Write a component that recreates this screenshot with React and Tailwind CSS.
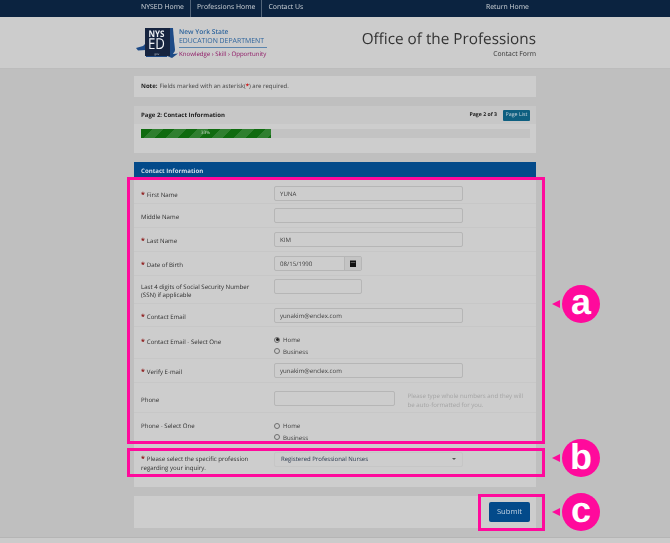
function Label({ req, children, mt = 'mt-[4.5px]' }) {
  return (
    <div className={`w-[133px] shrink-0 pr-[10px] text-[6.1px] leading-[8.7px] text-[#2e2e2e] ${mt}`}>
      {req && <span className="text-[#8a0f0f] font-bold text-[7px] leading-[8px] mr-[2px]">*</span>}
      {children}
    </div>
  )
}

function Input({ value, w = 'w-[189px]' }) {
  return (
    <div className={`${w} h-[15px] flex items-center px-[5px] border border-[#b6b6b6] rounded-[2px] text-[6.1px] text-[#3c3c3c]`}>
      {value}
    </div>
  )
}

function Row({ h, pt = 'pt-[4px]', mt, label, req, border = true, children }) {
  return (
    <div className={`flex items-start px-[7px] ${pt} ${h} ${border ? 'border-b border-[#c7c7c7]' : ''}`}>
      <Label req={req} mt={mt}>{label}</Label>
      {children}
    </div>
  )
}

function Radio({ checked, children }) {
  return (
    <div className="flex items-center h-[11.5px] text-[6.1px] text-[#3c3c3c]">
      <span className="w-[6px] h-[6px] rounded-full border border-[#6e6e6e] mr-[3px] flex items-center justify-center">
        {checked && <span className="w-[3px] h-[3px] rounded-full bg-[#222]" />}
      </span>
      {children}
    </div>
  )
}

function Logo() {
  return (
    <div className="flex items-center ml-[2px]">
      <svg width="42" height="34" viewBox="0 0 42 34">
        <path d="M0 22 L7 20 L10 17 L10 3 L36 2 L38 15 L39 24 L37 28 L42 27.5 L36 32 L31 30 L31 31 L10 31 L10 24 L2 24.5 Z" fill="#1d4a86" />
        <rect x="9" y="2" width="25" height="28" fill="#16243f" />
        <path d="M34 2 L37 2 L38 16 L38.5 26 L34 28 Z" fill="#1d4a86" />
        <text x="20.5" y="11" textAnchor="middle" fill="#eef1f5" fontSize="9" fontWeight="700" textLength="16" lengthAdjust="spacingAndGlyphs" fontFamily="Open Sans, sans-serif">NYS</text>
        <text x="20.5" y="23" textAnchor="middle" fill="#eef1f5" fontSize="15" textLength="17" lengthAdjust="spacingAndGlyphs" fontFamily="Open Sans, sans-serif">ED</text>
        <text x="20.5" y="28.5" textAnchor="middle" fill="#b9c2cf" fontSize="3" fontFamily="Open Sans, sans-serif">.gov</text>
      </svg>
      <div className="ml-[1px] w-[88px]">
        <div className="text-[6.7px] leading-[9.5px] font-semibold text-[#2f659d]">New York State</div>
        <div className="text-[6.9px] leading-[9.5px] text-[#2f659d] whitespace-nowrap border-b border-[#5c85ad] pb-[1px]">EDUCATION DEPARTMENT</div>
        <div className="text-[6.1px] leading-[9px] mt-[0.5px] text-[#8d1463] whitespace-nowrap">Knowledge › Skill › Opportunity</div>
      </div>
    </div>
  )
}

function Callout({ letter, className, pb }) {
  return (
    <div className={`absolute left-[552px] flex items-center ${className}`}>
      <span className="w-0 h-0 border-y-[4px] border-y-transparent border-r-[8px] border-r-[#ff0a9c] mr-[2px]" />
      <span className={`w-[38px] h-[38px] rounded-full bg-[#ff0a9c] text-white font-bold text-[36px] flex items-center justify-center font-['Liberation_Sans',sans-serif] ${pb}`}>{letter}</span>
    </div>
  )
}

export default function App() {
  return (
    <div className="relative h-[543px] w-[670px] overflow-hidden bg-[#bfbfbf] font-['Open_Sans',sans-serif] [text-rendering:geometricPrecision]">
      <div className="blur-[0.3px]">
        <nav className="h-[17px] bg-[#0b2340] text-[#d0d5da] text-[6.9px] flex justify-center">
          <div className="w-[402px] flex items-center">
            <span className="pl-[7px] pr-[6px] h-full flex items-center border-r border-[#53657a]">NYSED Home</span>
            <span className="px-[6px] h-full flex items-center border-r border-[#53657a]">Professions Home</span>
            <span className="px-[6px]">Contact Us</span>
            <span className="ml-auto mr-[7px]">Return Home</span>
          </div>
        </nav>

        <header className="h-[52px] bg-[#cccccc] border-b border-[#bcbcbc] flex justify-center">
          <div className="w-[402px] flex items-center justify-between">
            <Logo />
            <div className="text-right text-[#333] pt-[3px]">
              <div className="text-[15.3px] leading-[18px]">Office of the Professions</div>
              <div className="text-[6.8px] leading-[9px] mt-[1px]">Contact Form</div>
            </div>
          </div>
        </header>

        <main className="w-[402px] mx-auto pt-[7px]">
          <div className="h-[21px] bg-[#cdcdcd] flex items-center px-[7px] text-[6px] text-[#444]">
            <b className="text-[#222] mr-[2px]">Note:</b> Fields marked with an asterisk(<span className="text-[#c00] font-bold">*</span>) are required.
          </div>

          <div className="mt-[9px] h-[47px] bg-[#cdcdcd]">
            <div className="h-[18px] bg-[#c7c7c7] flex items-center pl-[7px] pr-[6px] text-[#222] font-bold">
              <span className="text-[6px]">Page 2: Contact Information</span>
              <span className="ml-auto text-[5.2px]">Page 2 of 3</span>
              <span className="ml-[6px] w-[27px] h-[11px] rounded-[1px] bg-[#0e5f80] text-[#c6d5dc] text-[5.3px] font-normal flex items-center justify-center">Page List</span>
            </div>
            <div className="mx-[6.5px] mt-[5px] h-[9px] bg-[#c3c3c3]">
              <div className="w-[130px] h-full bg-[repeating-linear-gradient(135deg,#0f6b0f_0_8px,#2f7f2f_8px_16px)] text-[#c5d8c5] text-[4.5px] flex items-center justify-center">33%</div>
            </div>
          </div>

          <div className="mt-[9px] h-[325px] bg-[#cdcdcd] rounded-t-[1px]">
            <div className="h-[17px] bg-[#034a8a] flex items-center px-[7px] text-[6.1px] font-bold text-[#d5dfe9]">Contact Information</div>

            <Row h="h-[25px]" pt="pt-[7px]" label="First Name" req><Input value="YUNA" /></Row>
            <Row h="h-[24px]" label="Middle Name"><Input /></Row>
            <Row h="h-[24px]" label="Last Name" req><Input value="KIM" /></Row>
            <Row h="h-[24px]" label="Date of Birth" req>
              <div className="w-[88px] h-[15px] flex border border-[#b6b6b6] rounded-[2px] text-[6.1px] text-[#3c3c3c]">
                <span className="flex-1 flex items-center px-[5px]">08/15/1990</span>
                <span className="w-[17px] bg-[#c4c4c4] border-l border-[#b6b6b6] flex items-center justify-center">
                  <svg width="6" height="7" viewBox="0 0 6 7">
                    <rect x="0" y="0.5" width="6" height="6.5" fill="#111" />
                    <rect x="0.7" y="2" width="4.6" height="0.6" fill="#888" />
                  </svg>
                </span>
              </div>
            </Row>
            <Row h="h-[28px]" pt="pt-[3px]" mt="mt-[3.5px]" label="Last 4 digits of Social Security Number (SSN) if applicable"><Input w="w-[88px]" /></Row>
            <Row h="h-[23px]" label="Contact Email" req><Input value="yunakim@enclex.com" /></Row>
            <Row h="h-[32px]" pt="pt-[7px]" mt="mt-[4px]" label="Contact Email - Select One" req>
              <div><Radio checked>Home</Radio><Radio>Business</Radio></div>
            </Row>
            <Row h="h-[24px]" label="Verify E-mail" req><Input value="yunakim@enclex.com" /></Row>
            <Row h="h-[30px]" pt="pt-[8px]" label="Phone">
              <Input w="w-[121px]" />
              <p className="ml-[13px] w-[122px] mt-[1px] text-[6.1px] leading-[8.5px] text-[#a4a4a4]">Please type whole numbers and they will be auto-formatted for you.</p>
            </Row>
            <Row h="h-[33px]" pt="pt-[7px]" mt="mt-[1.5px]" label="Phone - Select One" border={false}>
              <div><Radio>Home</Radio><Radio>Business</Radio></div>
            </Row>
            <div className="flex items-start px-[7px] pt-[5.5px]">
              <Label req mt="mt-[3.5px]">Please select the specific profession regarding your inquiry.</Label>
              <div className="w-[189px] h-[15px] flex items-center justify-between px-[6px] text-[6px] text-[#2c3a50] border border-[#c6c6c6] rounded-[2px]">
                Registered Professional Nurses
                <span className="w-0 h-0 border-x-[2px] border-x-transparent border-t-[2px] border-t-[#555]" />
              </div>
            </div>
          </div>

          <div className="mt-[9px] h-[32px] bg-[#cdcdcd] flex items-center justify-end pr-[6px]">
            <button className="w-[41px] h-[20px] rounded-[2px] bg-[#034a8a] text-[#c3d3e3] text-[7.6px]">Submit</button>
          </div>
        </main>
      </div>

      <footer className="absolute left-0 right-0 bottom-0 h-[6px] bg-[#cbcbcb] border-t border-[#b5b5b5]" />

      <div className="absolute left-[127px] top-[177px] w-[418px] h-[267px] border-[3px] border-[#ff0a9c]" />
      <div className="absolute left-[127px] top-[448px] w-[418px] h-[29px] border-[3px] border-[#ff0a9c]" />
      <div className="absolute left-[478px] top-[494px] w-[67px] h-[37px] border-[3px] border-[#ff0a9c]" />
      <Callout letter="a" className="top-[285px]" pb="pb-[4px]" />
      <Callout letter="b" className="top-[439px]" pb="pb-[2px]" />
      <Callout letter="c" className="top-[493px]" pb="pb-[4px]" />
    </div>
  )
}
